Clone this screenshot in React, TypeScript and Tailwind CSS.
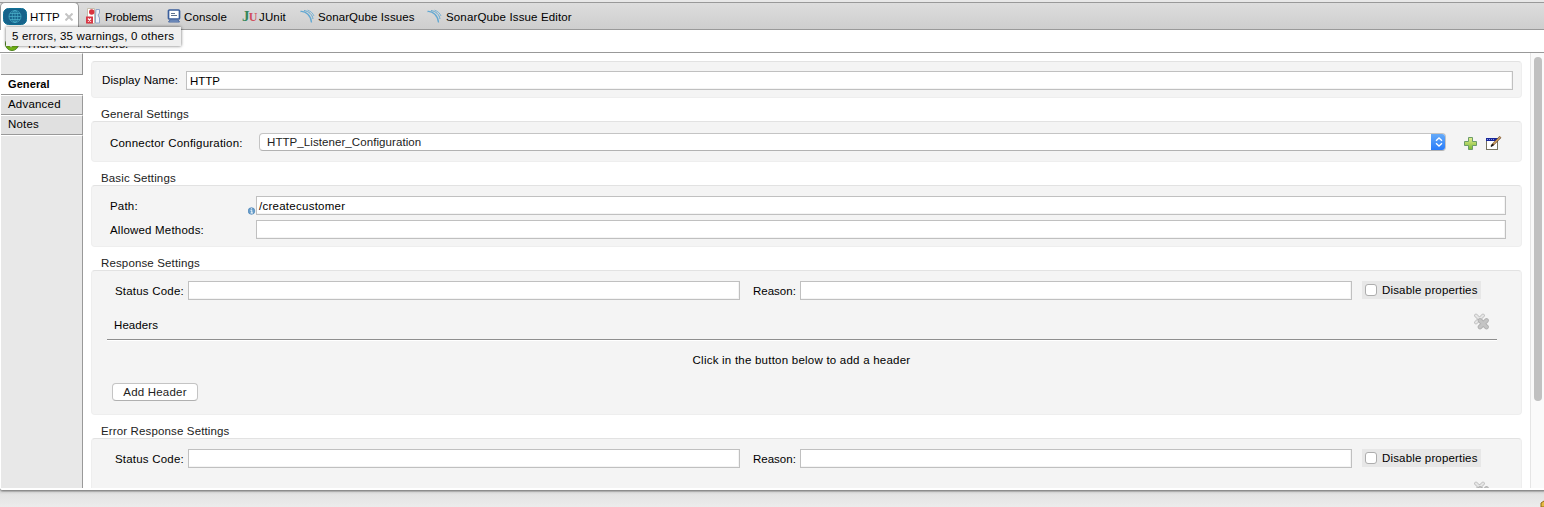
import type { ReactNode } from "react";

function Field({ className, children }: { className: string; children?: ReactNode }) {
  return (
    <div className={`h-[19px] shrink-0 border border-[#c0c0c0] bg-white shadow-[inset_-1px_-1px_0_#f4f4f4] ${className}`}>
      {children}
    </div>
  );
}

function Panel({ className, children }: { className: string; children?: ReactNode }) {
  return (
    <div className={`shrink-0 rounded-[4px] border border-[#eeeeee] border-t-[#e2e2e2] bg-[#f4f4f4] ${className}`}>
      {children}
    </div>
  );
}

function Title({ children }: { children: ReactNode }) {
  return <div className="h-[23px] shrink-0 pt-[9px] pl-[10px] tracking-[.14px] text-[#222]">{children}</div>;
}

function SonarIcon() {
  return (
    <svg width="15" height="14" viewBox="0 0 15 14" fill="none" stroke="#62a8d2" className="shrink-0">
      <path d="M.5 2.500C6 2 11 6.500 11.500 13.500" strokeWidth="1.300" />
      <path d="M4 1.500C9 2.300 12.300 5.500 13 10" strokeWidth="1" />
      <path d="M7.500 1.200C11 2.200 13 4.500 14 7" strokeWidth=".8" />
    </svg>
  );
}

function GlobeIcon() {
  return (
    <svg width="24" height="17" viewBox="0 0 24 17" fill="none" className="shrink-0">
      <rect x=".5" y=".5" width="23" height="16" rx="5" fill="#17638b" stroke="#0f7195" />
      <g stroke="#4cb3cc" strokeWidth=".7">
        <circle cx="12" cy="8.500" r="6" />
        <ellipse cx="12" cy="8.500" rx="2.800" ry="6" />
        <path d="M12 2.500v12M6 8.500h12M7 5.500h10M7 11.500h10" />
      </g>
    </svg>
  );
}

function ProblemsIcon() {
  return (
    <svg width="15" height="16" viewBox="0 0 15 16" className="shrink-0">
      <path d="M1.500.5h7v15h-7z" fill="#fff" stroke="#c5bfae" />
      <path d="M10 1.500h3.500v3.500l-1.500 2 1.500 3v5H9.500V8z" fill="#eef3fb" stroke="#92a6c9" />
      <circle cx="5.700" cy="4" r="2.700" fill="#d93340" />
      <rect x="0" y="8.500" width="7" height="7" fill="#d83746" />
      <path d="M2 10.500l3 3M5 10.500l-3 3" stroke="#fff" strokeWidth="1.200" />
    </svg>
  );
}

function ConsoleIcon() {
  return (
    <svg width="14" height="14" viewBox="0 0 14 14" className="shrink-0">
      <rect x="1.500" y="1" width="11" height="9" rx="1" fill="#fff" stroke="#3b5f9c" strokeWidth="1.700" />
      <path d="M4 4.500h4M4 6.500h6" stroke="#60738f" />
      <path d="M3 11h8l1.500 2h-11z" fill="#8ba5cd" stroke="#4767a0" />
    </svg>
  );
}

function ClearIcon() {
  return (
    <svg width="17" height="17" viewBox="0 0 17 17" fill="none" strokeLinecap="round" className="shrink-0">
      <path d="M3 2.500l6 6M10 2.500L3 9.500" stroke="#c2c2c2" strokeWidth="3.800" />
      <path d="M3 2.500l6 6M10 2.500L3 9.500" stroke="#e6e6e6" strokeWidth="2" />
      <path d="M7 7.500l6.500 6.500M13.500 7.500L7 14" stroke="#b1b1b1" strokeWidth="4.600" />
      <path d="M7 7.500l6.500 6.500M13.500 7.500L7 14" stroke="#c4c4c4" strokeWidth="3" />
    </svg>
  );
}

function StatusRow() {
  return (
    <div className="flex h-[19px] shrink-0 items-center">
      <span className="w-[73px] shrink-0">Status Code:</span>
      <Field className="w-[552px]" />
      <span className="ml-[13px] w-[47px] shrink-0 tracking-[0px]">Reason:</span>
      <Field className="w-[552px]" />
      <div className="ml-[10px] flex h-[18px] w-[119px] shrink-0 items-center self-start bg-[#e7e7e7] pl-[3px]">
        <span className="mr-[5px] size-[12px] shrink-0 rounded-[3px] border border-[#adadad] bg-white" />
        <span className="-mt-px tracking-[.16px]">Disable properties</span>
      </div>
    </div>
  );
}

function TabBar() {
  return (
    <div className="flex h-[28px] shrink-0 border-t border-b border-[#999] bg-gradient-to-b from-[#dddddd] to-[#cecece]">
      <div className="-mt-px flex h-[28px] w-[79px] shrink-0 items-center rounded-t-[5px] border border-b-0 border-[#999] bg-white pl-[2px]">
        <GlobeIcon />
        <span className="ml-[3px] w-[35px] pt-px tracking-[-.1px]">HTTP</span>
        <svg width="8" height="8" viewBox="0 0 8 8" className="mt-px shrink-0" stroke="#c4c4c4" strokeWidth="2">
          <path d="M.5.5l7 7M7.500.5l-7 7" />
        </svg>
      </div>
      <div className="flex w-[88px] shrink-0 items-center pl-[7px]">
        <ProblemsIcon />
        <span className="ml-[4px] pt-[2px] tracking-[-.1px]">Problems</span>
      </div>
      <div className="flex w-[75px] shrink-0 items-center">
        <ConsoleIcon />
        <span className="ml-[3px] pt-[2px] tracking-[.12px]">Console</span>
      </div>
      <div className="flex w-[58px] shrink-0 items-center">
        <span className="w-[17px] font-['Liberation_Serif',serif] text-[15px] font-bold tracking-[-.8px] text-[#34875b]">
          J<span className="text-[12px] text-[#d14d5c]">U</span>
        </span>
        <span className="pt-[2px] tracking-[.15px]">JUnit</span>
      </div>
      <div className="flex w-[127px] shrink-0 items-center">
        <SonarIcon />
        <span className="ml-[3px] pt-[2px] tracking-[.08px]">SonarQube Issues</span>
      </div>
      <div className="flex items-center">
        <SonarIcon />
        <span className="ml-[4px] pt-[2px] tracking-[.14px]">SonarQube Issue Editor</span>
      </div>
    </div>
  );
}

function Sidebar() {
  return (
    <nav className="ml-px flex w-[82px] shrink-0 flex-col bg-[#e8e8e8]">
      <div className="h-[22px] shrink-0 border-t border-r border-b border-[#929292] border-t-white" />
      <div className="flex h-[20px] shrink-0 items-center border-b border-[#999] bg-white pb-px pl-[7px] text-[11px] font-bold tracking-[.1px]">General</div>
      <div className="flex h-[20px] shrink-0 items-center border-t border-r border-b border-[#999] border-t-white bg-[#e0e0e0] pb-[2px] pl-[7px]">Advanced</div>
      <div className="flex h-[20px] shrink-0 items-center border-t border-r border-b border-[#999] border-t-white bg-[#e0e0e0] pb-[2px] pl-[7px]">Notes</div>
      <div className="flex-1 border-t border-r border-t-white border-r-[#999]" />
    </nav>
  );
}

export default function App() {
  return (
    <div className="relative flex h-[507px] w-[1544px] flex-col overflow-hidden bg-[#e8e8e8] pt-[2px] font-['Liberation_Sans',Arial,sans-serif] text-[11.5px] leading-[14px] tracking-[.2px] whitespace-nowrap text-black">
      <TabBar />
      <div className="flex h-[458px] shrink-0 flex-col bg-white">
        <div className="flex h-[23px] shrink-0 items-center border-b border-[#999] pt-[6px] pl-[5px]">
          <svg width="14" height="14" viewBox="0 0 14 14" className="shrink-0">
            <circle cx="7" cy="7" r="6.500" fill="#75b918" stroke="#4c831b" />
            <path d="M3.500 7l2.500 2.500L10.500 4" fill="none" stroke="#fff" strokeWidth="1.500" />
          </svg>
          <span className="ml-[7px] tracking-[0px]">There are no errors.</span>
        </div>
        <div className="flex h-[435px] shrink-0">
          <Sidebar />
          <main className="flex w-[1447px] shrink-0 flex-col overflow-hidden pt-[8px] pr-[8px] pl-[8px]">
            <Panel className="flex h-[37px] items-start pt-[9px] pl-[10px]">
              <span className="w-[84px] shrink-0 pt-[2px] tracking-[.1px]">Display Name:</span>
              <Field className="flex w-[1327px] items-center pl-[3px] tracking-[0px]">HTTP</Field>
            </Panel>
            <Title>General Settings</Title>
            <Panel className="flex h-[41px] items-start pt-[11px] pl-[18px]">
              <span className="w-[149px] shrink-0 pt-[3px]">Connector Configuration:</span>
              <div className="flex h-[18px] w-[1187px] shrink-0 items-center overflow-hidden rounded-[4px] border border-[#c4c4c4] border-b-[#b2b2b2] bg-white pl-[7px] text-[#222]">
                <span className="flex-1 tracking-[.08px]">HTTP_Listener_Configuration</span>
                <div className="-my-px -mr-px flex h-[18px] w-[15px] items-center justify-center bg-gradient-to-b from-[#69adf8] to-[#2378fa]">
                  <svg width="8" height="10" viewBox="0 0 8 10" fill="none" stroke="#fff" strokeWidth="1.300">
                    <path d="M1 3.800L4 1l3 2.800M1 6.200L4 9l3-2.800" />
                  </svg>
                </div>
              </div>
              <svg width="13" height="13" viewBox="0 0 13 13" className="mt-[4px] ml-[18px] shrink-0">
                <defs>
                  <linearGradient id="plus" x2="0" y2="1">
                    <stop stopColor="#e5ef92" />
                    <stop offset="1" stopColor="#7ab932" />
                  </linearGradient>
                </defs>
                <path d="M4.500.5h4v4h4v4h-4v4h-4v-4h-4v-4h4z" fill="url(#plus)" stroke="#6b9c68" />
              </svg>
              <svg width="16" height="15" viewBox="0 0 16 15" className="mt-[3px] ml-[9px] shrink-0">
                <rect x=".5" y="2.500" width="11" height="11" fill="#fff" stroke="#767260" />
                <path d="M0 2h12v3H0z" fill="#18279a" />
                <path d="M1 3.500h8" stroke="#8794e0" strokeDasharray="1 1" />
                <path d="M6 9.500L14.500 .8" stroke="#6b4628" strokeWidth="2.400" />
                <path d="M7.500 8L14.300 1" stroke="#d4a465" strokeWidth="1.200" />
                <path d="M5 10.500l2-2" stroke="#111" strokeWidth="1.600" />
              </svg>
            </Panel>
            <Title>Basic Settings</Title>
            <Panel className="flex h-[62px] flex-col gap-[5px] pt-[10px] pl-[18px]">
              <div className="flex h-[19px] items-center">
                <span className="w-[138px] shrink-0">Path:</span>
                <svg width="8" height="8" viewBox="0 0 8 8" className="mt-[11px] shrink-0">
                  <circle cx="3.500" cy="4" r="3.300" fill="#689fcb" stroke="#4a83b8" strokeWidth=".7" />
                  <path d="M2.500 3.300h1.300V6M2.500 6H5M2.900 1.800h1.200" stroke="#fff" fill="none" strokeWidth=".9" />
                </svg>
                <Field className="flex w-[1250px] items-center pl-[2px] tracking-[.26px]">/createcustomer</Field>
              </div>
              <div className="flex h-[19px] items-center">
                <span className="w-[146px] shrink-0">Allowed Methods:</span>
                <Field className="w-[1250px]" />
              </div>
            </Panel>
            <Title>Response Settings</Title>
            <Panel className="flex h-[145px] flex-col pt-[10px]">
              <div className="pl-[23px]">
                <StatusRow />
              </div>
              <div className="mt-[9px] ml-[15px] flex h-[31px] w-[1390px] shrink-0 items-start justify-between border-b border-[#8e8e8e] pt-[4px] pr-[7px] pl-[7px] shadow-[0_1px_0_white]">
                <span className="pt-[5px] tracking-[.08px]">Headers</span>
                <ClearIcon />
              </div>
              <div className="mt-[13px] ml-[15px] w-[1390px] pr-px text-center tracking-[.23px]">Click in the button below to add a header</div>
              <div className="mt-[16px] ml-[20px] flex h-[18px] w-[86px] shrink-0 items-center justify-center rounded-[4px] border border-[#c4c4c4] border-b-[#b0b0b0] bg-white text-[#222]">
                Add Header
              </div>
            </Panel>
            <Title>Error Response Settings</Title>
            <Panel className="flex h-[145px] flex-col pt-[10px]">
              <div className="pl-[23px]">
                <StatusRow />
              </div>
              <div className="mt-[13px] ml-[1381px]">
                <ClearIcon />
              </div>
            </Panel>
          </main>
          <div className="flex w-[14px] shrink-0 border-l border-[#e5e5e5] bg-[#fafafa] pt-[4px] pl-[3px]">
            <div className="h-[344px] w-[8px] rounded-full bg-[#c1c1c1]" />
          </div>
        </div>
      </div>
      <footer className="h-[19px] shrink-0 bg-gradient-to-b from-[#c4c4c4] via-[#e3e3e3] via-35% to-[#ececec]">
        <div className="h-[3px] rounded-bl-[3px] border-b border-[#8c8c8c] bg-white shadow-[0_1px_1px_#aaa]" />
        <div className="flex justify-end pt-[9px]">
          <svg width="4" height="7" viewBox="0 0 4 7">
            <path d="M4 1L1 3v4h3" fill="#e5bc43" stroke="#906716" />
          </svg>
        </div>
      </footer>
      <div className="absolute top-[27px] left-[6px] flex h-[19px] w-[175px] items-center bg-[#efefef] pb-px pl-[6px] shadow-[0_0_3px_rgba(0,0,0,.6)]">
        5 errors, 35 warnings, 0 others
      </div>
    </div>
  );
}
